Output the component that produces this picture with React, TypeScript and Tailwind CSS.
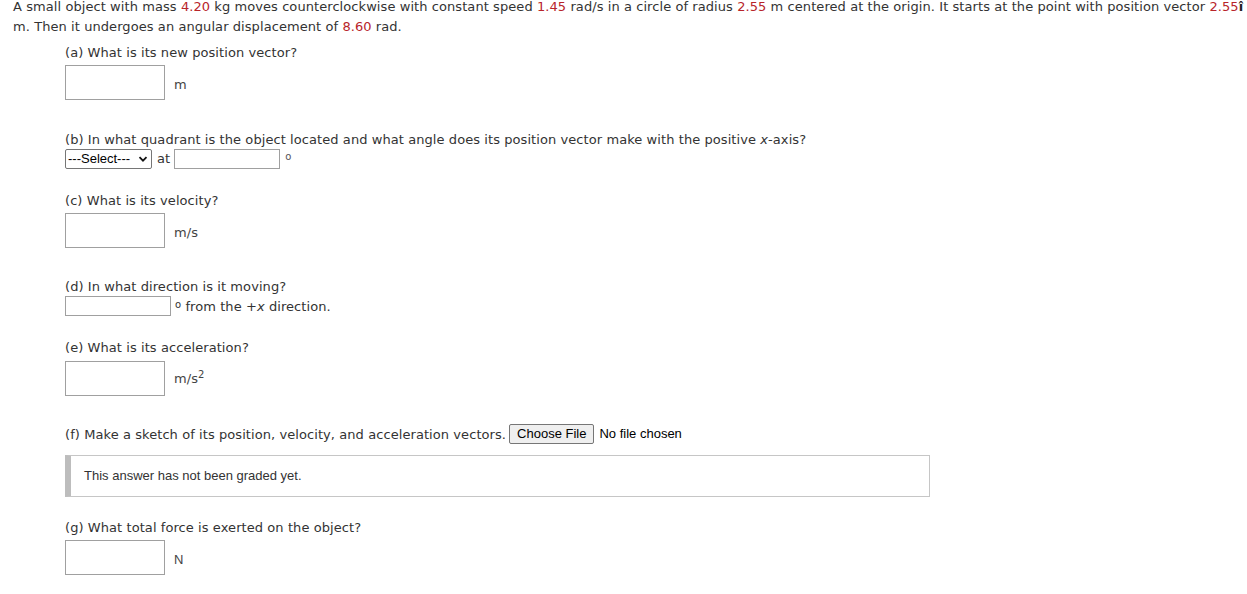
import React from 'react';

const verdana = { fontFamily: '"DejaVu Sans", Verdana, sans-serif' };
const arial = { fontFamily: '"Liberation Sans", Arial, sans-serif' };

function Num({ children }: { children: React.ReactNode }) {
  return <span className="text-[#b8242a]">{children}</span>;
}

// question label: 20px tall, text sits 1px lower than a plain 20px line
function Q({ className = '', children }: { className?: string; children: React.ReactNode }) {
  return <div className={`pt-[2px] leading-[18px] ${className}`}>{children}</div>;
}

function BigInput() {
  return <div className="h-[35px] w-[100px] shrink-0 border border-[#a0a0a0] bg-white" />;
}

function AnswerRow({ unit, className = 'mt-[3px]' }: { unit: React.ReactNode; className?: string }) {
  return (
    <div className={`flex items-center ${className}`}>
      <BigInput />
      <span className="ml-[9px] mt-[4px] text-[#444]">{unit}</span>
    </div>
  );
}

export default function App() {
  return (
    <div
      className="h-[594px] w-full overflow-hidden bg-white text-[13px] leading-[20px] tracking-[0.075px] text-[#333]"
      style={verdana}
    >
      <div className="-mt-[3px] pl-[13px]">
        <div className="whitespace-nowrap">
          A small object with mass <Num>4.20</Num> kg moves counterclockwise with constant speed{' '}
          <Num>1.45</Num> rad/s in a circle of radius <Num>2.55</Num> m centered at the origin. It
          starts at the point with position vector <Num>2.55</Num>
          <b className="text-[#222]">î</b>
        </div>
        <div>
          m. Then it undergoes an angular displacement of <Num>8.60</Num> rad.
        </div>
      </div>

      <div className="pl-[65px]">
        {/* (a) */}
        <Q className="mt-[5px]">(a) What is its new position vector?</Q>
        <AnswerRow unit="m" />

        {/* (b) */}
        <Q className="mt-[29px]">
          (b) In what quadrant is the object located and what angle does its position vector make
          with the positive <i>x</i>-axis?
        </Q>
        <div className="flex h-[20px] items-center">
          <div
            className="flex h-[20px] w-[87px] items-center justify-between rounded-[2px] border border-[#767676] pl-[2px] pr-[3px] text-[13px] tracking-normal text-black"
            style={arial}
          >
            <span>---Select---</span>
            <svg width="10" height="10" viewBox="0 0 10 10">
              <path d="M1.5 3.2 L5 6.7 L8.5 3.2" fill="none" stroke="#111" strokeWidth="1.8" />
            </svg>
          </div>
          <span className="ml-[5px]">at</span>
          <div className="ml-[4px] h-[20px] w-[106px] border border-[#a0a0a0]" />
          <span className="ml-[5px] -mt-[4px] text-[10px] text-[#555]">o</span>
        </div>

        {/* (c) */}
        <Q className="mt-[21px]">(c) What is its velocity?</Q>
        <AnswerRow unit="m/s" />

        {/* (d) */}
        <Q className="mt-[28px]">(d) In what direction is it moving?</Q>
        <div className="flex h-[20px] items-center">
          <div className="h-[20px] w-[106px] border border-[#a0a0a0]" />
          <span className="ml-[4px] pt-[2px] leading-[18px]">
            <span className="relative -top-[3px] text-[10px]">o</span> from the +<i>x</i> direction.
          </span>
        </div>

        {/* (e) */}
        <Q className="mt-[21px]">(e) What is its acceleration?</Q>
        <div className="mt-[4px] flex items-center">
          <BigInput />
          <span className="ml-[9px] mt-[1px] text-[#444]">
            m/s<sup className="text-[10px]">2</sup>
          </span>
        </div>

        {/* (f) */}
        <div className="mt-[28px] flex h-[20px] items-center">
          <span className="pt-[2px] leading-[18px]">
            (f) Make a sketch of its position, velocity, and acceleration vectors.
          </span>
          <div className="ml-[3px] flex items-center text-[13px] tracking-normal text-black" style={arial}>
            <span className="flex h-[20px] items-center rounded-[2px] border border-[#767676] bg-[#efefef] px-[7px]">
              Choose File
            </span>
            <span className="ml-[5px]">No file chosen</span>
          </div>
        </div>

        <div
          className="mt-[11px] flex h-[42px] w-[865px] items-center border border-[#c6c6c6] border-l-[6px] border-l-[#bdbdbd] pl-[13px] text-[13px] tracking-normal text-[#333]"
          style={arial}
        >
          This answer has not been graded yet.
        </div>

        {/* (g) */}
        <Q className="mt-[20px]">(g) What total force is exerted on the object?</Q>
        <AnswerRow unit={<span style={arial}>N</span>} />
      </div>
    </div>
  );
}
